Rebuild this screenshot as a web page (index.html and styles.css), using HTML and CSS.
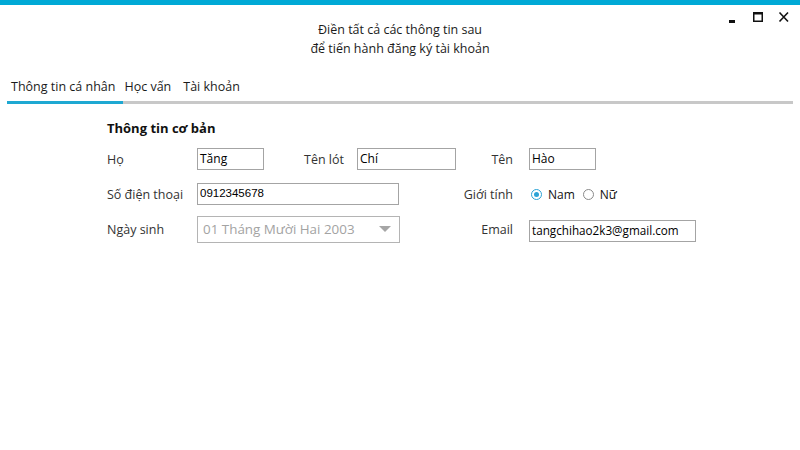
FILE: index.html
```html
<!DOCTYPE html>
<html lang="vi">
<head>
<meta charset="utf-8">
<title>Đăng ký tài khoản</title>
<link rel="stylesheet" href="styles.css">
</head>
<body>
<div class="topbar"></div>
<header class="header">
  <div class="controls">
    <svg class="ctl" width="14" height="14" viewBox="0 0 14 14"><rect x="4" y="10" width="6" height="3" fill="#111"/></svg>
    <svg class="ctl" width="14" height="14" viewBox="0 0 14 14"><rect x="2.75" y="2.75" width="8.5" height="8.5" fill="none" stroke="#111" stroke-width="1.5"/><rect x="2" y="2" width="10" height="2.5" fill="#111"/></svg>
    <svg class="ctl" width="14" height="14" viewBox="0 0 14 14"><path d="M2.5 2.5 L11 11.5 M11 2.5 L2.5 11.5" stroke="#111" stroke-width="1.6"/></svg>
  </div>
  <h1 class="title">Điền tất cả các thông tin sau<br>để tiến hành đăng ký tài khoản</h1>
</header>
<nav class="tabs">
  <span class="tab active">Thông tin cá nhân</span>
  <span class="tab">Học vấn</span>
  <span class="tab last">Tài khoản</span>
</nav>
<div class="tabline"><div class="tabline-active"></div></div>
<main class="form">
  <h2 class="section">Thông tin cơ bản</h2>
  <div class="grid">
    <label class="lbl">Họ</label>
    <div class="box w67">Tăng</div>
    <label class="lbl">Tên lót</label>
    <div class="box w99">Chí</div>
    <label class="lbl right">Tên</label>
    <div class="box w67">Hào</div>

    <label class="lbl">Số điện thoại</label>
    <div class="box w202 span3 narrow">0912345678</div>
    <label class="lbl right">Giới tính</label>
    <div class="radios">
      <span class="radio checked"></span><span class="rtext">Nam</span>
      <span class="radio"></span><span class="rtext">Nữ</span>
    </div>

    <label class="lbl">Ngày sinh</label>
    <div class="combo span3">
      <span>01 Tháng Mười Hai 2003</span>
      <svg width="12" height="8" viewBox="0 0 12 8"><path d="M0 1 L12 1 L6 7 Z" fill="#a6a6a6"/></svg>
    </div>
    <label class="lbl right">Email</label>
    <div class="box w167 email">tangchihao2k3@gmail.com</div>
  </div>
</main>
</body>
</html>
```
FILE: styles.css
```css
* { box-sizing: border-box; }
html, body { margin: 0; padding: 0; background: #fff; }
body {
  width: 800px;
  height: 450px;
  overflow: hidden;
  font-family: "Open Sans", "Noto Sans", sans-serif;
  font-size: 12px;
  color: #1b1b1b;
}
.topbar { height: 5px; background: #00a9d6; }
.header { position: relative; height: 59px; padding-top: 15px; }
.controls {
  position: absolute;
  top: 5px;
  right: 9px;
  display: flex;
  gap: 12px;
}
.title {
  margin: 0;
  font-weight: normal;
  font-size: 12.5px;
  line-height: 19px;
  text-align: center;
  color: #1b1b1b;
}
.tabs {
  display: flex;
  gap: 9px;
  padding-left: 11px;
  padding-top: 13px;
  height: 37px;
  font-size: 12.5px;
  line-height: 20px;
  color: #1b1b1b;
}
.tab.last { margin-left: 3px; }
.tabline {
  margin-left: 7px;
  width: 786px;
  height: 3px;
  background: #c8c8c8;
}
.tabline-active { width: 116px; height: 3px; background: #1ea8d2; }
.form { padding-left: 107px; padding-top: 15px; }
.section {
  margin: 0;
  font-size: 13px;
  font-weight: bold;
  line-height: 18px;
  color: #111;
}
.grid {
  margin-top: 11px;
  display: grid;
  grid-template-columns: 90px 107px 53px 103px 69px 1fr;
  grid-auto-rows: 22px;
  row-gap: 13px;
  align-items: center;
}
.lbl { font-size: 12.5px; color: #333; }
.lbl.right { text-align: right; padding-right: 16px; }
.box {
  height: 22px;
  border: 1px solid #a4a4a4;
  padding: 0 0 0 2px;
  line-height: 19px;
  font-size: 12px;
  color: #000;
}
.email { font-size: 11.7px; }
.narrow { font-family: "Liberation Sans", Arial, sans-serif; font-size: 11.5px; }
.w67 { width: 67px; }
.w99 { width: 99px; }
.w167 { width: 167px; margin-top: 3px; }
.w202 { width: 202px; }
.span3 { grid-column: 2 / 5; }
.radios { display: flex; align-items: center; padding-left: 2px; }
.radio {
  width: 11px; height: 11px;
  border: 1px solid #8a8a8a;
  border-radius: 50%;
  position: relative;
  margin-right: 6px;
}
.radio.checked { border-color: #2ba3d6; }
.radio.checked::after {
  content: "";
  position: absolute;
  left: 2px; top: 2px;
  width: 5px; height: 5px;
  border-radius: 50%;
  background: #2ba3d6;
}
.rtext { font-size: 12px; color: #111; margin-right: 8px; }
.combo {
  width: 203px;
  height: 27px;
  border: 1px solid #b4b4b4;
  display: flex;
  align-items: center;
  justify-content: space-between;
  padding: 0 8px 0 5px;
  color: #a3a3a3;
  font-size: 13.4px;
}
```
